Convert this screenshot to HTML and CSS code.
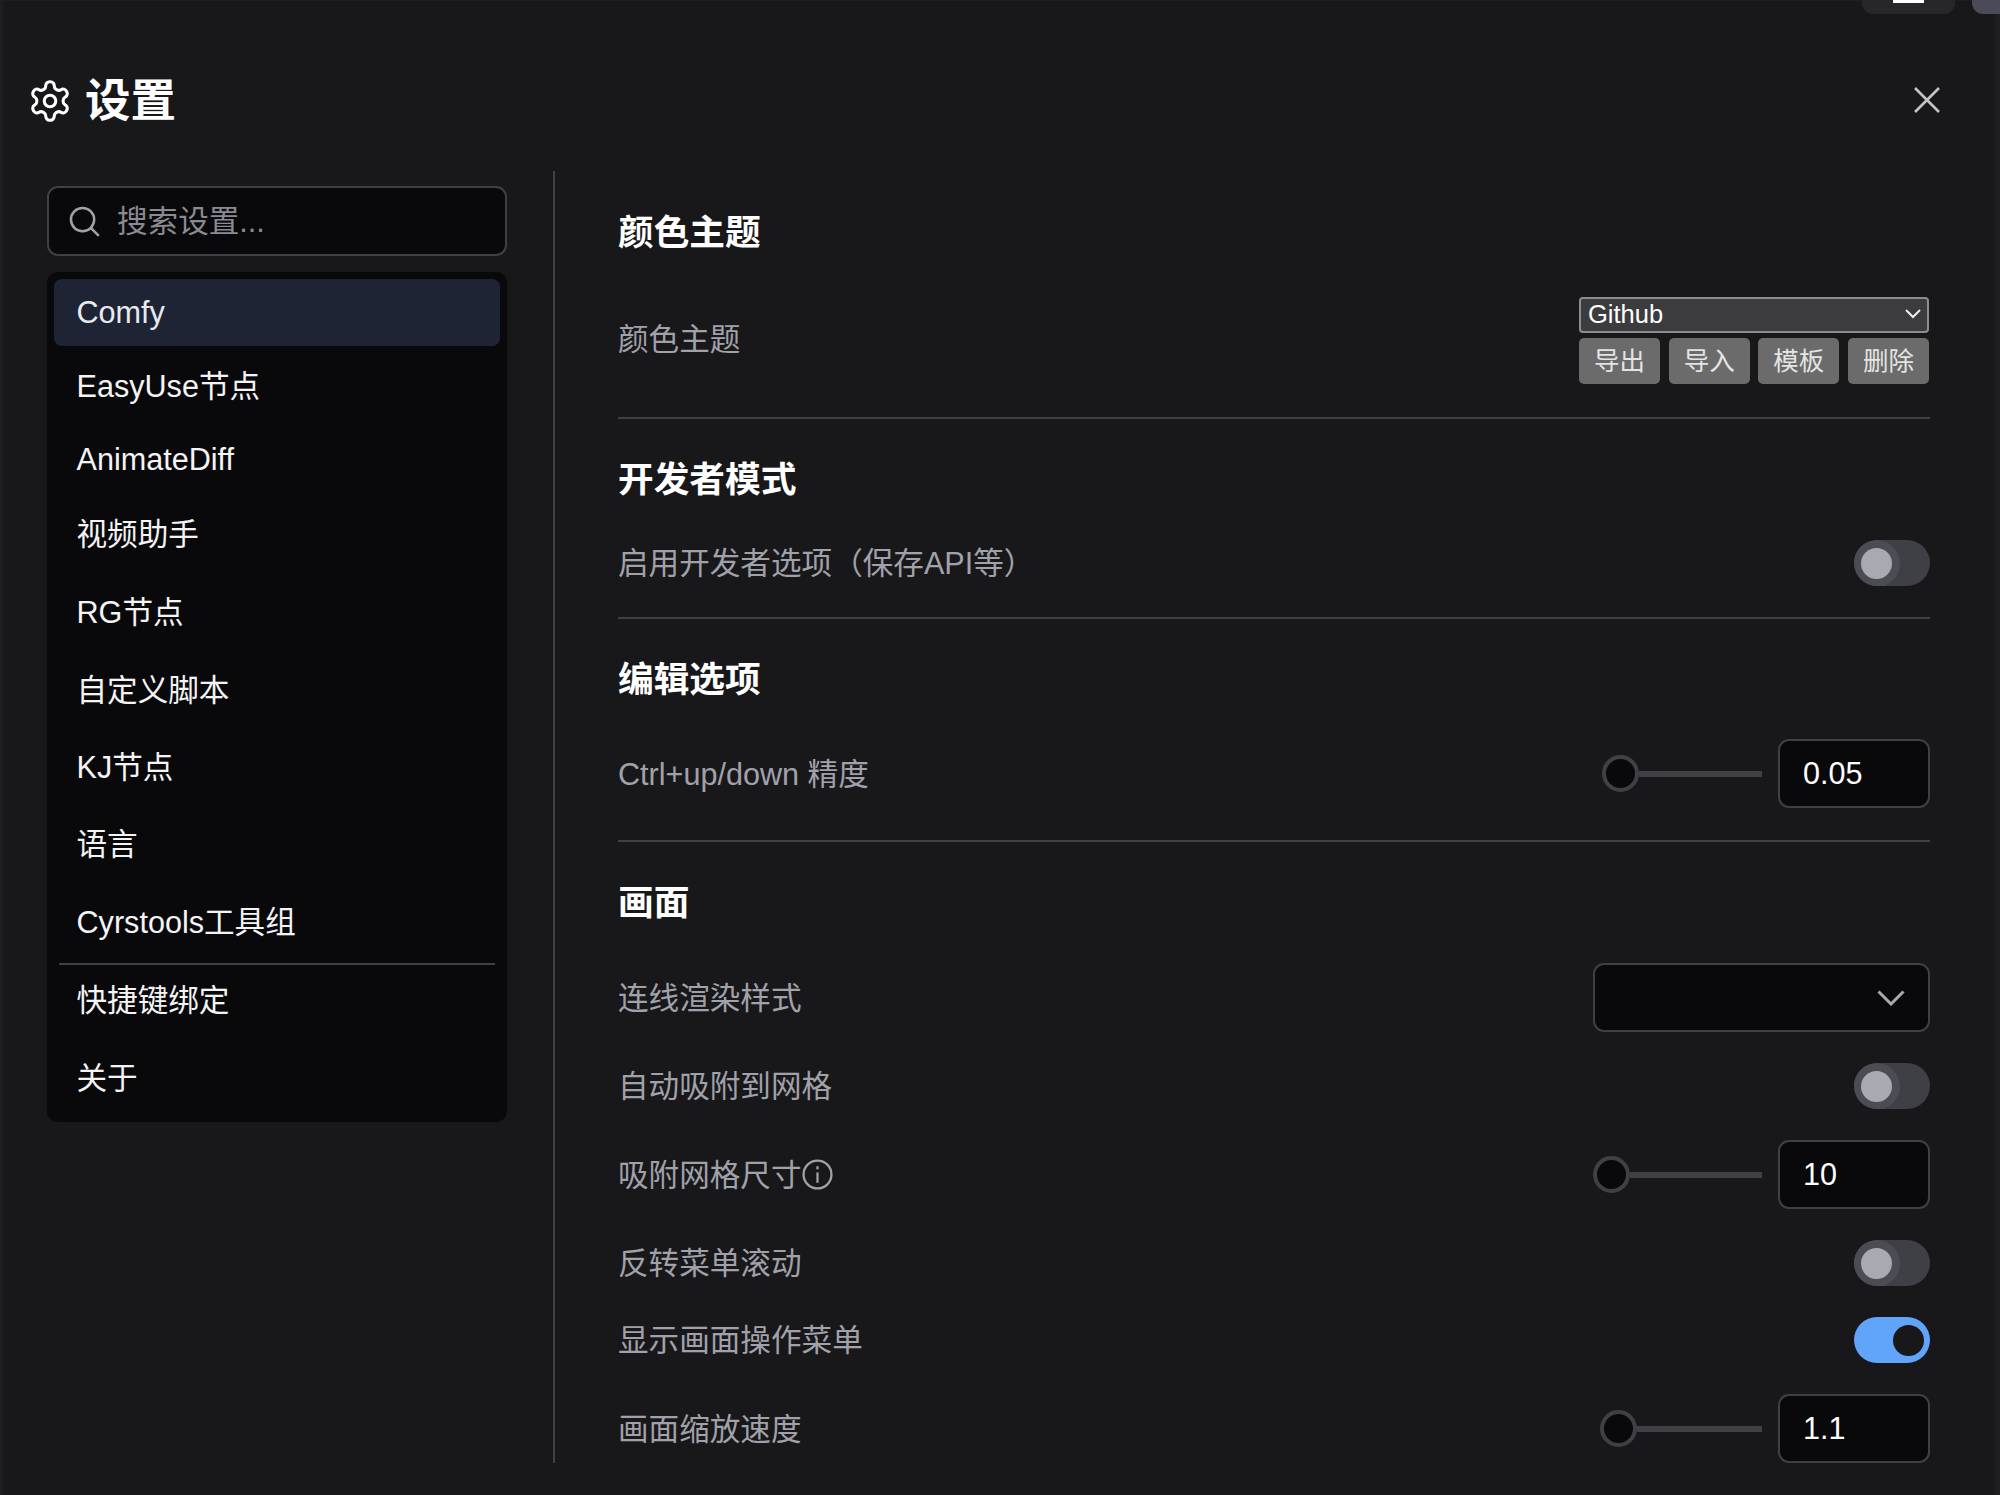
FILE: index.html
```html
<!DOCTYPE html>
<html lang="zh-CN">
<head>
<meta charset="utf-8">
<title>设置</title>
<link rel="stylesheet" href="styles.css">
</head>
<body>
<div class="topbar">
  <div class="top-btn"><span class="top-glyph"></span></div>
  <div class="top-btn2"></div>
</div>
<div class="dialog">
  <header class="header">
    <svg class="gear" viewBox="0 0 24 24" fill="none" stroke="currentColor" stroke-width="1.6" stroke-linecap="round" stroke-linejoin="round"><path d="M12.22 2h-.44a2 2 0 0 0-2 2v.18a2 2 0 0 1-1 1.73l-.43.25a2 2 0 0 1-2 0l-.15-.08a2 2 0 0 0-2.73.73l-.22.38a2 2 0 0 0 .73 2.73l.15.1a2 2 0 0 1 1 1.72v.51a2 2 0 0 1-1 1.74l-.15.09a2 2 0 0 0-.73 2.73l.22.38a2 2 0 0 0 2.73.73l.15-.08a2 2 0 0 1 2 0l.43.25a2 2 0 0 1 1 1.73V20a2 2 0 0 0 2 2h.44a2 2 0 0 0 2-2v-.18a2 2 0 0 1 1-1.73l.43-.25a2 2 0 0 1 2 0l.15.08a2 2 0 0 0 2.73-.73l.22-.39a2 2 0 0 0-.73-2.73l-.15-.08a2 2 0 0 1-1-1.74v-.5a2 2 0 0 1 1-1.74l.15-.09a2 2 0 0 0 .73-2.73l-.22-.38a2 2 0 0 0-2.73-.73l-.15.08a2 2 0 0 1-2 0l-.43-.25a2 2 0 0 1-1-1.73V4a2 2 0 0 0-2-2z"/><circle cx="12" cy="12" r="3"/></svg>
    <h1 class="title">设置</h1>
    <svg class="close" viewBox="0 0 28 28" fill="none" stroke="currentColor" stroke-width="2.6"><path d="M2 2 26 26M26 2 2 26"/></svg>
  </header>
  <div class="body">
    <aside class="side">
      <div class="search">
        <svg class="search-icon" viewBox="0 0 32 32" fill="none" stroke="currentColor" stroke-width="2.6" stroke-linecap="round"><circle cx="14" cy="14" r="12"/><path d="M23 23l7 7"/></svg>
        <span class="placeholder">搜索设置...</span>
      </div>
      <nav class="list">
        <div class="item active i1">Comfy</div>
        <div class="item i2">EasyUse节点</div>
        <div class="item i3">AnimateDiff</div>
        <div class="item">视频助手</div>
        <div class="item">RG节点</div>
        <div class="item">自定义脚本</div>
        <div class="item up0">KJ节点</div>
        <div class="item up1">语言</div>
        <div class="item up1">Cyrstools工具组</div>
        <div class="sep"></div>
        <div class="item up2">快捷键绑定</div>
        <div class="item up2">关于</div>
      </nav>
    </aside>
    <main class="content">
      <section class="section s1">
        <h2 class="section-title">颜色主题</h2>
        <div class="row">
          <span class="label label-up">颜色主题</span>
          <div class="palette">
            <div class="native-select"><span>Github</span>
              <svg class="native-chev" viewBox="0 0 16 10" fill="none" stroke="currentColor" stroke-width="2"><path d="M1 1l7 7 7-7"/></svg>
            </div>
            <div class="btns">
              <span class="btn">导出</span><span class="btn">导入</span><span class="btn">模板</span><span class="btn">删除</span>
            </div>
          </div>
        </div>
      </section>
      <section class="section s2">
        <h2 class="section-title">开发者模式</h2>
        <div class="row">
          <span class="label">启用开发者选项（保存API等）</span>
          <span class="toggle"><span class="knob"></span></span>
        </div>
      </section>
      <section class="section s3">
        <h2 class="section-title">编辑选项</h2>
        <div class="row">
          <span class="label">Ctrl+up/down 精度</span>
          <div class="number-field">
            <div class="slider s-a"><span class="thumb"></span><span class="track"></span></div>
            <span class="number">0.05</span>
          </div>
        </div>
      </section>
      <section class="section last">
        <h2 class="section-title">画面</h2>
        <div class="row">
          <span class="label">连线渲染样式</span>
          <div class="dropdown">
            <svg class="chev" viewBox="0 0 28 16" fill="none" stroke="currentColor" stroke-width="3"><path d="M1.5 1.5 14 14 26.500 1.500"/></svg>
          </div>
        </div>
        <div class="row">
          <span class="label">自动吸附到网格</span>
          <span class="toggle"><span class="knob"></span></span>
        </div>
        <div class="row">
          <span class="label with-info">吸附网格尺寸<svg class="info" viewBox="0 0 30 30" fill="none" stroke="currentColor" stroke-width="2.200"><circle cx="15" cy="15" r="13.500"/><path d="M15 13v10"/><path d="M15 7v3"/></svg></span>
          <div class="number-field">
            <div class="slider s-b"><span class="thumb"></span><span class="track"></span></div>
            <span class="number">10</span>
          </div>
        </div>
        <div class="row">
          <span class="label">反转菜单滚动</span>
          <span class="toggle"><span class="knob"></span></span>
        </div>
        <div class="row">
          <span class="label">显示画面操作菜单</span>
          <span class="toggle on"><span class="knob"></span></span>
        </div>
        <div class="row">
          <span class="label">画面缩放速度</span>
          <div class="number-field">
            <div class="slider s-c"><span class="thumb"></span><span class="track"></span></div>
            <span class="number">1.1</span>
          </div>
        </div>
      </section>
    </main>
  </div>
</div>
</body>
</html>
```
FILE: styles.css
```css
* { box-sizing: border-box; }
html, body { margin: 0; height: 100%; }
body {
  width: 2000px;
  height: 1495px;
  overflow: hidden;
  background: #1e1e20;
  color: #fff;
  font-family: "Liberation Sans", "Noto Sans CJK SC", sans-serif;
  font-size: 30.6px;
  position: relative;
}
.topbar {
  position: absolute;
  top: 0;
  right: 0;
  display: flex;
  gap: 17px;
  z-index: 2;
}
.top-btn {
  width: 93px;
  height: 14px;
  background: #27272a;
  border-radius: 0 0 11px 11px;
  display: flex;
  justify-content: center;
}
.top-glyph { width: 31px; height: 3px; background: #fff; display: block; }
.top-btn2 {
  width: 28px;
  height: 14px;
  background: #4a4a58;
  border-radius: 0 0 0 11px;
}
.dialog {
  margin-left: 3px;
  margin-right: 5px;
  margin-top: 1px;
  height: 1494px;
  background: #18181b;
  display: flex;
  flex-direction: column;
}
.header {
  height: 170px;
  flex: none;
  padding: 30px 55px 0 24px;
  display: flex;
  align-items: center;
}
.gear { width: 46px; height: 46px; color: #fff; flex: none; margin-right: 12px; }
.title { font-size: 45.5px; font-weight: 700; margin: 0; line-height: 60px; padding-top: 2px; }
.close { width: 28px; height: 28px; margin-left: auto; margin-bottom: 2px; margin-right: -1px; color: #c4c4c8; }
.body {
  display: flex;
  height: 1292px;
  overflow: hidden;
  padding-left: 44px;
}
.side {
  width: 508px;
  flex: none;
  padding: 15px 46px 0 0;
  border-right: 2px solid #3f3f46;
}
.search {
  height: 70px;
  background: #09090b;
  border: 2px solid #3f3f46;
  border-radius: 11px;
  display: flex;
  align-items: center;
  padding-left: 20px;
}
.search-icon { width: 31px; height: 31px; color: #a1a1aa; flex: none; margin-right: 17px; }
.placeholder { color: #8a8a92; padding-bottom: 4px; }
.list {
  margin-top: 16px;
  height: 850px;
  background: #09090b;
  border-radius: 11px;
  padding: 7px;
}
.item {
  height: 78px;
  padding-left: 22.5px;
  display: flex;
  align-items: center;
  line-height: 40px;
  color: #f4f4f5;
  border-radius: 8px;
}
.item.active { background: #1e2433; color: #e8eaf0; }
.i1 { height: 67px; padding-bottom: 2px; }
.i2 { padding-top: 2px; }
.i3 { height: 71px; padding-bottom: 2px; }
.up0 { padding-bottom: 2px; }
.up1 { padding-bottom: 5px; }
.up2 { padding-bottom: 9px; }
.sep { height: 2px; background: #3f3f46; margin: 0 5px; }
.content {
  flex: 1;
  margin-left: 63px;
  margin-right: 65px;
  overflow: hidden;
  padding-top: 32px;
}
.section {
  display: flex;
  flex-direction: column;
  gap: 30px;
  padding-bottom: 31px;
  margin-bottom: 31px;
  border-bottom: 2px solid #3f3f46;
}
.s1 { gap: 34px; padding-bottom: 33px; }
.s3 { gap: 29px; padding-bottom: 32px; }
.section.last { border-bottom: 0; margin-bottom: 0; padding-bottom: 0; gap: 31px; }
.section.last .section-title { margin-bottom: -1px; }
.section-title { margin: 0; font-size: 35.7px; font-weight: 700; line-height: 60px; height: 60px; }
.row { display: flex; align-items: center; justify-content: space-between; }
.label { color: #a1a1aa; line-height: 40px; }
.label-up { padding-bottom: 3px; }
.with-info { display: flex; align-items: center; gap: 0; }
.info { width: 31px; height: 31px; color: #a1a1aa; flex: none; }
.palette { width: 350px; margin-right: 1px; display: flex; flex-direction: column; gap: 5px; }
.native-select {
  height: 36px;
  background: #3c3c3e;
  border: 2px solid #8c8c8c;
  border-radius: 4px;
  font-size: 25.5px;
  line-height: 30px;
  padding: 0 6px 2px 7px;
  display: flex;
  align-items: center;
  justify-content: space-between;
}
.native-chev { width: 16px; height: 10px; color: #eee; }
.btns { display: flex; justify-content: space-between; }
.btn {
  width: 81px;
  height: 46px;
  background: #6b6b6b;
  color: #e4e4e4;
  border-radius: 5px;
  font-size: 25.5px;
  padding-bottom: 6px;
  display: flex;
  align-items: center;
  justify-content: center;
}
.toggle {
  width: 76px;
  height: 46px;
  border-radius: 23px;
  background: #3f3f46;
  padding-left: 7px;
  display: flex;
  align-items: center;
  overflow: hidden;
}
.knob {
  width: 31px;
  height: 31px;
  border-radius: 50%;
  background: #a9a9b2;
  box-shadow: 0 0 0 8px #4c4c54;
}
.toggle.on { background: #60a5fa; justify-content: flex-end; padding: 0 6px 0 0; }
.toggle.on .knob { background: #18181b; box-shadow: none; }
.number-field { display: flex; align-items: center; gap: 16px; }
.slider { display: flex; align-items: center; }
.thumb {
  width: 37px;
  height: 37px;
  border: 4px solid #3f3f46;
  border-radius: 50%;
  background: #09090b;
  flex: none;
}
.track { height: 6px; background: #3f3f46; display: block; }
.s-a .track { width: 123px; }
.s-b .track { width: 132px; }
.s-c .track { width: 125px; }
.number {
  width: 152px;
  height: 69px;
  background: #09090b;
  border: 2px solid #3f3f46;
  border-radius: 11px;
  padding-left: 23px;
  display: flex;
  align-items: center;
}
.dropdown {
  width: 337px;
  height: 69px;
  background: #09090b;
  border: 2px solid #3f3f46;
  border-radius: 11px;
  display: flex;
  align-items: center;
  justify-content: flex-end;
  padding-right: 23px;
}
.chev { width: 28px; height: 16px; color: #a9a9b0; }
```
